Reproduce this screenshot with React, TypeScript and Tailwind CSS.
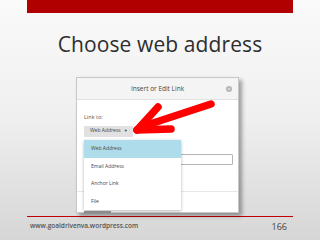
import React from "react";

export default function App() {
  const items = ["Web Address", "Email Address", "Anchor Link", "File"];
  return (
    <div className="w-[320px] h-[240px] overflow-hidden flex flex-col bg-gradient-to-b from-[#fafafa] via-[#efefef] to-[#d6d6d6] font-['Open_Sans',sans-serif]">
      <div className="mx-[27px] h-[13px] bg-[#b00000] shrink-0" />
      <div className="h-[64px] shrink-0 flex items-center justify-center pb-[2px]">
        <span className="text-[21px] leading-none text-[#2e2e2e] tracking-[0.1px]">Choose web address</span>
      </div>
      <div className="relative ml-[76px] w-[163px] h-[136px] shrink-0 bg-white border border-[#c8c8c8] shadow-[3px_3px_4px_rgba(0,0,0,0.35)]">
        <div className="h-[22px] bg-[#f4f4f4] border-b border-[#e2e2e2] flex items-center justify-center relative">
          <span className="text-[6.5px] text-[#444]">Insert or Edit Link</span>
          <div className="absolute right-[6px] top-[8px] w-[6px] h-[6px] rounded-full bg-[#b5b5b5] flex items-center justify-center text-white text-[5px] leading-none">×</div>
        </div>
        <div className="relative">
          <div className="pl-[7px] pt-[15px] text-[5.5px] text-[#555] leading-none">Link to:</div>
          <div className="ml-[7px] mt-[5px] w-[49px] h-[11px] bg-[#e1e1e1] rounded-[1px] flex items-center pl-[6px] gap-[3px] text-[5px] text-[#444]">
            <span>Web Address</span>
            <span className="text-[4px]">▼</span>
          </div>
          <div className="ml-[7px] mt-[17px] w-[149px] h-[11px] border border-[#b5b5b5] rounded-[1px]" />
          <div className="mt-[26px] border-t border-[#e8e8e8]" />
        </div>
        <div className="absolute left-[7px] top-[62px] w-[97px] bg-white shadow-[0_1px_3px_rgba(0,0,0,0.3)] flex flex-col">
          {items.map((t, i) => (
            <div
              key={t}
              className={
                "h-[17.5px] flex items-center pl-[7px] text-[5px] text-[#444] " +
                (i === 0 ? "bg-[#aedcea]" : "bg-white")
              }
            >
              {t}
            </div>
          ))}
        </div>
        <div className="absolute left-[7px] top-[133px] w-[27px] h-[2px] bg-[#8a8a8a]" />
      </div>
      <svg className="absolute left-0 top-0" width="320" height="240" viewBox="0 0 320 240">
        <g stroke="#ff0000" strokeWidth="7.5" strokeLinecap="round" strokeLinejoin="round" fill="none">
          <line x1="141" y1="127" x2="211" y2="104" />
          <line x1="137" y1="130" x2="158" y2="107" />
          <line x1="137" y1="130" x2="171" y2="129" />
        </g>
      </svg>
      <div className="mx-[27px] mt-[3px] h-[1px] bg-[#c00000] shrink-0" />
      <div className="mx-[30px] mt-[5px] flex items-center justify-between">
        <span className="text-[6.5px] font-semibold text-[#555] leading-none">www.goaldrivenva.wordpress.com</span>
        <span className="text-[9px] text-[#444] leading-none mr-[3px]">166</span>
      </div>
    </div>
  );
}
